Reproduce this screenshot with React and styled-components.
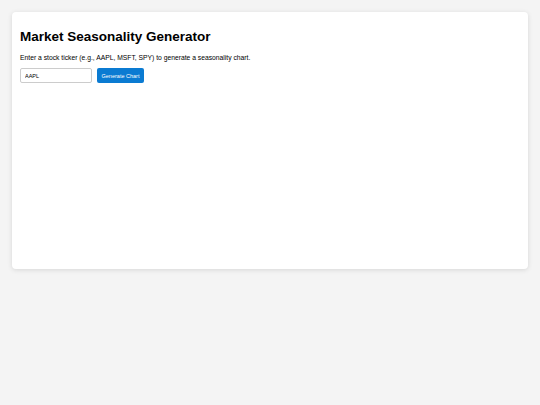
import styled, { createGlobalStyle } from "styled-components";

const Global = createGlobalStyle`
  html, body { margin: 0; padding: 0; }
  body {
    background: #f4f4f4;
    font-family: "Liberation Sans", Arial, sans-serif;
    color: #000;
  }
`;

export default function App() {
  return (
    <>
      <Global />
      <Page>
        <Card>
          <Title>Market Seasonality Generator</Title>
          <Intro>
            Enter a stock ticker (e.g., AAPL, MSFT, SPY) to generate a seasonality chart.
          </Intro>
          <Form onSubmit={(e) => e.preventDefault()}>
            <TickerInput defaultValue="AAPL" />
            <Button type="submit">Generate Chart</Button>
          </Form>
          <ChartArea />
        </Card>
      </Page>
    </>
  );
}

const Page = styled.div`
  padding: 12px;
`;

const Card = styled.div`
  background: #fff;
  border-radius: 4px;
  box-shadow: 0 1px 5px rgba(0, 0, 0, 0.12);
  padding: 17px 8px;
  height: 257px;
  box-sizing: border-box;
`;

const Title = styled.h1`
  margin: 0 0 8px;
  font-size: 13.5px;
  font-weight: 700;
  line-height: 16px;
`;

const Intro = styled.p`
  margin: 0 0 5px;
  font-size: 6.75px;
  line-height: 10px;
`;

const Form = styled.form`
  display: flex;
  gap: 5px;
  align-items: stretch;
`;

const TickerInput = styled.input`
  width: 72px;
  height: 15px;
  box-sizing: border-box;
  border: 1px solid #ccc;
  border-radius: 2px;
  padding: 0 4px;
  font-family: inherit;
  font-size: 5.5px;
  color: #000;
  outline: none;
`;

const Button = styled.button`
  height: 15px;
  width: 47px;
  box-sizing: border-box;
  border: none;
  border-radius: 2px;
  background: #0b7bd2;
  color: #fff;
  font-family: inherit;
  font-size: 5.5px;
  padding: 0;
  cursor: pointer;
`;

const ChartArea = styled.div``;
